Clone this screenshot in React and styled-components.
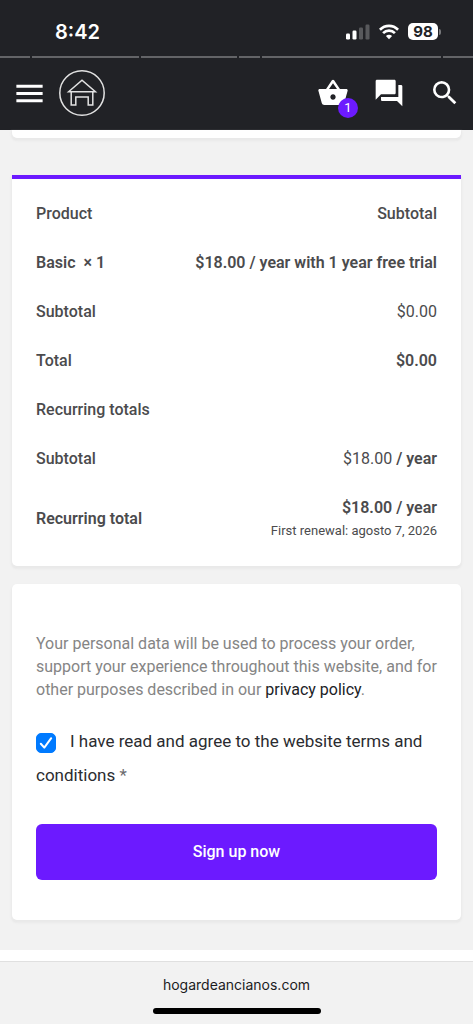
import React, { useState } from "react";
import styled, { createGlobalStyle } from "styled-components";
import { MdMenu, MdShoppingBasket, MdForum, MdSearch } from "react-icons/md";

const segments = [30, 106, 96, 21, 178, 30];

const rows = [
  { label: "Subtotal", value: "$0.00" },
  { label: "Total", value: <strong>$0.00</strong> },
];

export default function App() {
  const [accepted, setAccepted] = useState(true);

  return (
    <Page>
      <GlobalStyle />
      <TopBar>
        <StatusBar>
          <Time>8:42</Time>
          <StatusIcons>
            <SignalIcon />
            <WifiIcon />
            <Battery>
              <BatteryLevel>98</BatteryLevel>
              <BatteryTip />
            </Battery>
          </StatusIcons>
        </StatusBar>
        <Segments>
          {segments.map((grow, i) => (
            <Segment key={i} $grow={grow} />
          ))}
        </Segments>
        <Header>
          <Group $gap={12}>
            <IconButton aria-label="Menu">
              <MdMenu size={35} />
            </IconButton>
            <LogoLink href="#" aria-label="Home">
              <LogoIcon />
            </LogoLink>
          </Group>
          <Group $gap={24}>
            <IconButton aria-label="Cart">
              <MdShoppingBasket size={32} />
              <Badge>1</Badge>
            </IconButton>
            <IconButton aria-label="Messages">
              <MdForum size={32} />
            </IconButton>
            <IconButton aria-label="Search">
              <MdSearch size={32} />
            </IconButton>
          </Group>
        </Header>
      </TopBar>

      <Main>
        <PreviousCard />
        <OrderCard>
          <Table>
            <thead>
              <tr>
                <th>Product</th>
                <th>Subtotal</th>
              </tr>
            </thead>
            <tbody>
              <tr>
                <th scope="row">
                  <strong>Basic&nbsp; × 1</strong>
                </th>
                <td>
                  <strong>$18.00 / year with 1 year free trial</strong>
                </td>
              </tr>
              {rows.map((row) => (
                <tr key={row.label}>
                  <th scope="row">{row.label}</th>
                  <td>{row.value}</td>
                </tr>
              ))}
              <tr>
                <th colSpan={2}>Recurring totals</th>
              </tr>
              <tr>
                <th scope="row">Subtotal</th>
                <td>
                  $18.00 <strong>/ year</strong>
                </td>
              </tr>
              <tr>
                <th scope="row">
                  <strong>Recurring total</strong>
                </th>
                <td>
                  <strong>$18.00 / year</strong>
                  <Renewal>First renewal: agosto 7, 2026</Renewal>
                </td>
              </tr>
            </tbody>
          </Table>
        </OrderCard>

        <PaymentCard>
          <Privacy>
            Your personal data will be used to process your order, support your
            experience throughout this website, and for other purposes described
            in our <a href="#">privacy policy</a>.
          </Privacy>
          <Terms htmlFor="terms">
            <CheckWrap>
              <Checkbox
                id="terms"
                type="checkbox"
                checked={accepted}
                onChange={(e) => setAccepted(e.target.checked)}
              />
              {accepted && (
                <svg width="20" height="20" viewBox="0 0 20 20" fill="none">
                  <path d="M4.8 10.8L8.3 14.6L15.2 5.2" stroke="#fff" strokeWidth="2" strokeLinecap="round" strokeLinejoin="round" />
                </svg>
              )}
            </CheckWrap>
            I have read and agree to the website terms and conditions{" "}
            <Required>*</Required>
          </Terms>
          <SubmitButton type="button">Sign up now</SubmitButton>
        </PaymentCard>
      </Main>

      <BrowserBar>
        <Address>hogardeancianos.com</Address>
        <HomeIndicator />
      </BrowserBar>
    </Page>
  );
}

function SignalIcon() {
  return (
    <svg width="24" height="16" viewBox="0 0 24 16" fill="#fff">
      <rect x="0" y="9.5" width="4" height="6" rx="1.2" />
      <rect x="6.5" y="6.5" width="4" height="9" rx="1.2" />
      <rect x="13" y="3.5" width="4" height="12" rx="1.2" opacity="0.25" />
      <rect x="19.5" y="0.5" width="4" height="15" rx="1.2" opacity="0.25" />
    </svg>
  );
}

function WifiIcon() {
  return (
    <svg width="20" height="16" viewBox="0 0 20 16" fill="none" stroke="#fff" strokeWidth="2.7">
      <path d="M0.9 5.7C6 0.5 14 0.5 19.1 5.7" />
      <path d="M4.1 9.1C7.4 5.8 12.6 5.8 15.9 9.1" />
      <path d="M6.9 12C8.7 10.2 11.3 10.2 13.1 12L10 15.2Z" fill="#fff" stroke="none" />
    </svg>
  );
}

function LogoIcon() {
  return (
    <svg width="46" height="46" viewBox="0 0 46 46" fill="none" stroke="#e2e2e2" strokeWidth="1.5">
      <circle cx="23" cy="23" r="22.2" />
      <path d="M9.6 21.8L23 10.2L36.4 21.8Z" />
      <path d="M12.2 22V34.9H16.8V27H29.2V34.9H33.8V22" />
    </svg>
  );
}

const GlobalStyle = createGlobalStyle`
  * {
    box-sizing: border-box;
  }
  body {
    margin: 0;
    background: #fff;
    font-family: Roboto, sans-serif;
    font-size: 16px;
    color: #4b4b4d;
  }
  a {
    color: inherit;
    text-decoration: none;
  }
`;

const Page = styled.div`
  display: flex;
  flex-direction: column;
  min-height: 100vh;
`;

const TopBar = styled.header`
  background: #212226;
  color: #fff;
`;

const StatusBar = styled.div`
  display: flex;
  align-items: center;
  justify-content: space-between;
  height: 56px;
  padding: 7px 32px 0 55px;
`;

const Time = styled.span`
  font: 600 20px/24px Inter, sans-serif;
`;

const StatusIcons = styled.div`
  display: flex;
  align-items: center;
  gap: 9px;
`;

const Battery = styled.div`
  display: flex;
  align-items: center;
  gap: 1px;
`;

const BatteryLevel = styled.span`
  width: 30px;
  border-radius: 5px;
  background: #fff;
  color: #212226;
  font: 700 15px/17px Inter, sans-serif;
  text-align: center;
`;

const BatteryTip = styled.span`
  width: 2px;
  height: 6px;
  border-radius: 0 2px 2px 0;
  background: #77787b;
`;

const Segments = styled.div`
  display: flex;
  gap: 2px;
`;

const Segment = styled.span`
  flex: ${({ $grow }) => $grow} 1 0;
  height: 2px;
  background: #636467;
`;

const Header = styled.div`
  display: flex;
  align-items: center;
  justify-content: space-between;
  height: 72px;
  padding: 0 12px 2px;
`;

const Group = styled.div`
  display: flex;
  align-items: center;
  gap: ${({ $gap }) => $gap}px;
`;

const IconButton = styled.button`
  position: relative;
  display: flex;
  padding: 0;
  border: 0;
  background: none;
  color: #fff;
  cursor: pointer;
`;

const LogoLink = styled.a`
  display: flex;
`;

const Badge = styled.span`
  position: absolute;
  right: -9px;
  bottom: -9px;
  width: 20px;
  border-radius: 50%;
  background: #6c1aff;
  font: 400 13px/20px Roboto, sans-serif;
  text-align: center;
`;

const Main = styled.main`
  display: flex;
  flex-direction: column;
  padding: 0 12px 30px;
  background: #f2f2f2;
`;

const Card = styled.section`
  border-radius: 5px;
  background: #fff;
  box-shadow: 0 2px 2px 1px #e9e9e9;
`;

const PreviousCard = styled(Card)`
  height: 8px;
  margin-bottom: 37px;
  border-radius: 0 0 5px 5px;
`;

const OrderCard = styled(Card)`
  margin-bottom: 18px;
  padding: 10px 24px 12px;
  border-top: 4px solid #6c1aff;
  border-radius: 0 0 5px 5px;
`;

const PaymentCard = styled(Card)`
  padding: 48px 24px 40px;
`;

const Table = styled.table`
  width: 100%;
  border-collapse: collapse;
  line-height: 25px;
  th,
  td {
    padding: 12px 0;
    font-weight: 400;
    text-align: right;
  }
  th {
    font-weight: 500;
  }
  th:first-child {
    text-align: left;
  }
  strong {
    font-weight: 600;
  }
`;

const Renewal = styled.div`
  font-size: 13px;
  line-height: 22px;
`;

const Privacy = styled.p`
  margin: 0 0 23px;
  line-height: 23px;
  color: #858585;
  a {
    color: #212226;
  }
`;

const Terms = styled.label`
  display: block;
  margin-bottom: 32px;
  font-size: 17px;
  line-height: 34px;
  color: #2b2c30;
`;

const CheckWrap = styled.span`
  display: inline-grid;
  margin-right: 14px;
  vertical-align: middle;
  > * {
    grid-area: 1 / 1;
  }
  svg {
    pointer-events: none;
  }
`;

const Checkbox = styled.input`
  appearance: none;
  width: 20px;
  height: 20px;
  margin: 0;
  border: 1px solid #007aff;
  border-radius: 5px;
  background: #fff;
  &:checked {
    background: #007aff;
  }
`;

const Required = styled.span`
  color: #6b6b6e;
`;

const SubmitButton = styled.button`
  display: block;
  width: 100%;
  height: 56px;
  border: 0;
  border-radius: 6px;
  background: #6c1aff;
  color: #fff;
  font: 500 16px/24px Roboto, sans-serif;
  cursor: pointer;
`;

const BrowserBar = styled.footer`
  display: flex;
  flex-direction: column;
  align-items: center;
  gap: 12px;
  margin-top: auto;
  padding: 12px 0 10px;
  border-top: 1px solid #e0e0e0;
  background: #f2f2f2;
`;

const Address = styled.span`
  font: 400 14px/22px Inter, sans-serif;
  color: #1c1c1e;
`;

const HomeIndicator = styled.span`
  width: 168px;
  height: 6px;
  border-radius: 3px;
  background: #000;
`;
